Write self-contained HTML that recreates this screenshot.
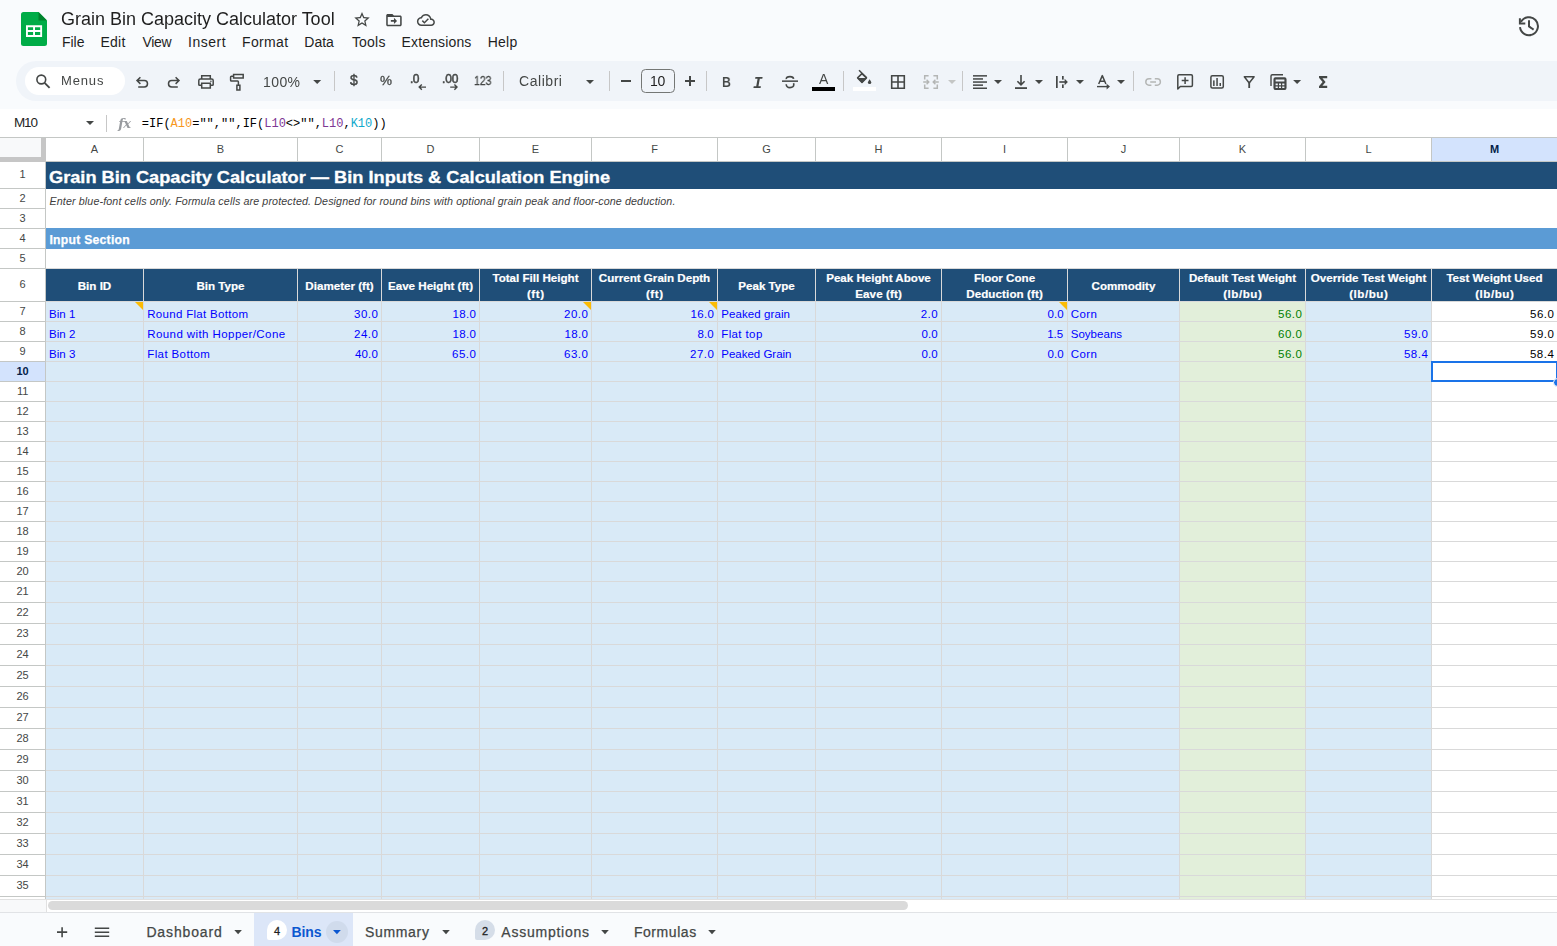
<!DOCTYPE html>
<html lang="en">
<head>
<meta charset="utf-8">
<title>Grain Bin Capacity Calculator Tool - Google Sheets</title>
<style>
html,body{margin:0;padding:0;}
body{width:1557px;height:946px;overflow:hidden;background:#f9fbfd;font-family:"Liberation Sans",sans-serif;}
#app{position:relative;width:1557px;height:946px;overflow:hidden;}
#app div,#app svg,#app span.t{position:absolute;}
#app span.t{white-space:pre;}
#app span.m{font-family:"Liberation Mono",monospace;}
#app span.s{font-family:"DejaVu Serif","Liberation Serif",serif;}
#app span.g{will-change:transform;}

</style>
</head>
<body>
<div id="app">
<div style="left:16px;top:61px;width:1600px;height:40px;background:#f0f4f9;border-radius:20px;"></div>
<div style="left:25px;top:67px;width:100px;height:28px;background:#fff;border-radius:14px;"></div>
<div style="left:0px;top:109px;width:1557px;height:28px;background:#fff;"></div>
<div style="left:0px;top:137px;width:1557px;height:763px;background:#fff;"></div>
<span class="t g" style="left:61.05px;top:7px;font-size:18px;line-height:25px;color:#1f1f1f;letter-spacing:-0.005px;">Grain Bin Capacity Calculator Tool</span>
<span class="t" style="left:61.88px;top:32px;font-size:14px;line-height:20px;color:#1f1f1f;letter-spacing:-0.003px;">File</span>
<span class="t" style="left:100.48px;top:32px;font-size:14px;line-height:20px;color:#1f1f1f;letter-spacing:0.259px;">Edit</span>
<span class="t" style="left:142.44px;top:32px;font-size:14px;line-height:20px;color:#1f1f1f;letter-spacing:-0.283px;">View</span>
<span class="t" style="left:188.02px;top:32px;font-size:14px;line-height:20px;color:#1f1f1f;letter-spacing:0.501px;">Insert</span>
<span class="t" style="left:242.08px;top:32px;font-size:14px;line-height:20px;color:#1f1f1f;letter-spacing:0.346px;">Format</span>
<span class="t" style="left:304.28px;top:32px;font-size:14px;line-height:20px;color:#1f1f1f;letter-spacing:0.018px;">Data</span>
<span class="t" style="left:351.92px;top:32px;font-size:14px;line-height:20px;color:#1f1f1f;letter-spacing:0.21px;">Tools</span>
<span class="t" style="left:401.58px;top:32px;font-size:14px;line-height:20px;color:#1f1f1f;letter-spacing:0.144px;">Extensions</span>
<span class="t" style="left:487.68px;top:32px;font-size:14px;line-height:20px;color:#1f1f1f;letter-spacing:0.263px;">Help</span>
<span class="t g" style="left:60.91px;top:72px;font-size:13px;line-height:18px;color:#444746;letter-spacing:0.856px;">Menus</span>
<span class="t g" style="left:262.71px;top:72px;font-size:14px;line-height:20px;color:#444746;letter-spacing:0.404px;">100%</span>
<span class="t g" style="left:518.74px;top:71px;font-size:14px;line-height:20px;color:#444746;letter-spacing:0.551px;">Calibri</span>
<span class="t g" style="left:649.91px;top:71px;font-size:14px;line-height:20px;color:#1f1f1f;letter-spacing:-0.335px;">10</span>
<div style="left:641px;top:69px;width:32px;height:22px;background:transparent;border:1px solid #747775;border-radius:4.5px;"></div>
<span class="t g" style="left:474.40px;top:73px;font-size:12px;line-height:17px;color:#444746;-webkit-text-stroke:0.3px #444746;transform:scaleX(0.8736);transform-origin:0 0;">123</span>
<span class="t" style="left:13.89px;top:113px;font-size:13.5px;line-height:19px;color:#1f1f1f;letter-spacing:-1.03px;">M10</span>
<div style="left:334px;top:71px;width:1px;height:20px;background:#c7c7c7;"></div>
<div style="left:503px;top:71px;width:1px;height:20px;background:#c7c7c7;"></div>
<div style="left:609px;top:71px;width:1px;height:20px;background:#c7c7c7;"></div>
<div style="left:706px;top:71px;width:1px;height:20px;background:#c7c7c7;"></div>
<div style="left:843px;top:71px;width:1px;height:20px;background:#c7c7c7;"></div>
<div style="left:962px;top:71px;width:1px;height:20px;background:#c7c7c7;"></div>
<div style="left:1133px;top:71px;width:1px;height:20px;background:#c7c7c7;"></div>
<div style="left:106px;top:115px;width:1px;height:17px;background:#c7c7c7;"></div>
<span class="t m" style="left:141.80px;top:116px;font-size:12px;line-height:17px;color:#000;">=IF(<span style="color:#f7981d">A10</span>="","",IF(<span style="color:#7e3794">L10</span>&lt;&gt;"",<span style="color:#7e3794">L10</span>,<span style="color:#11a9cc">K10</span>))</span>
<div style="left:46px;top:162px;width:1511px;height:27px;background:#1f4e78;"></div>
<div style="left:46px;top:228px;width:1511px;height:21px;background:#5b9bd5;"></div>
<div style="left:46px;top:268px;width:1511px;height:1px;background:#d9d9d9;"></div>
<div style="left:46px;top:269px;width:1511px;height:32px;background:#1f4e78;"></div>
<div style="left:46px;top:301px;width:1385px;height:599px;background:#d9eaf7;"></div>
<div style="left:1180px;top:301px;width:125px;height:599px;background:#e2efda;"></div>
<div style="left:46px;top:301px;width:1511px;height:1px;background:#d9d9d9;"></div>
<div style="left:46px;top:321px;width:1511px;height:1px;background:#d9d9d9;"></div>
<div style="left:46px;top:341px;width:1511px;height:1px;background:#d9d9d9;"></div>
<div style="left:46px;top:361px;width:1511px;height:1px;background:#d9d9d9;"></div>
<div style="left:46px;top:381px;width:1511px;height:1px;background:#d9d9d9;"></div>
<div style="left:46px;top:401px;width:1511px;height:1px;background:#d9d9d9;"></div>
<div style="left:46px;top:421px;width:1511px;height:1px;background:#d9d9d9;"></div>
<div style="left:46px;top:441px;width:1511px;height:1px;background:#d9d9d9;"></div>
<div style="left:46px;top:461px;width:1511px;height:1px;background:#d9d9d9;"></div>
<div style="left:46px;top:481px;width:1511px;height:1px;background:#d9d9d9;"></div>
<div style="left:46px;top:501px;width:1511px;height:1px;background:#d9d9d9;"></div>
<div style="left:46px;top:521px;width:1511px;height:1px;background:#d9d9d9;"></div>
<div style="left:46px;top:541px;width:1511px;height:1px;background:#d9d9d9;"></div>
<div style="left:46px;top:561px;width:1511px;height:1px;background:#d9d9d9;"></div>
<div style="left:46px;top:581px;width:1511px;height:1px;background:#d9d9d9;"></div>
<div style="left:46px;top:602px;width:1511px;height:1px;background:#d9d9d9;"></div>
<div style="left:46px;top:623px;width:1511px;height:1px;background:#d9d9d9;"></div>
<div style="left:46px;top:644px;width:1511px;height:1px;background:#d9d9d9;"></div>
<div style="left:46px;top:665px;width:1511px;height:1px;background:#d9d9d9;"></div>
<div style="left:46px;top:686px;width:1511px;height:1px;background:#d9d9d9;"></div>
<div style="left:46px;top:707px;width:1511px;height:1px;background:#d9d9d9;"></div>
<div style="left:46px;top:728px;width:1511px;height:1px;background:#d9d9d9;"></div>
<div style="left:46px;top:749px;width:1511px;height:1px;background:#d9d9d9;"></div>
<div style="left:46px;top:770px;width:1511px;height:1px;background:#d9d9d9;"></div>
<div style="left:46px;top:791px;width:1511px;height:1px;background:#d9d9d9;"></div>
<div style="left:46px;top:812px;width:1511px;height:1px;background:#d9d9d9;"></div>
<div style="left:46px;top:833px;width:1511px;height:1px;background:#d9d9d9;"></div>
<div style="left:46px;top:854px;width:1511px;height:1px;background:#d9d9d9;"></div>
<div style="left:46px;top:875px;width:1511px;height:1px;background:#d9d9d9;"></div>
<div style="left:46px;top:896px;width:1511px;height:1px;background:#d9d9d9;"></div>
<div style="left:143px;top:301px;width:1px;height:599px;background:#d9d9d9;"></div>
<div style="left:297px;top:301px;width:1px;height:599px;background:#d9d9d9;"></div>
<div style="left:381px;top:301px;width:1px;height:599px;background:#d9d9d9;"></div>
<div style="left:479px;top:301px;width:1px;height:599px;background:#d9d9d9;"></div>
<div style="left:591px;top:301px;width:1px;height:599px;background:#d9d9d9;"></div>
<div style="left:717px;top:301px;width:1px;height:599px;background:#d9d9d9;"></div>
<div style="left:815px;top:301px;width:1px;height:599px;background:#d9d9d9;"></div>
<div style="left:941px;top:301px;width:1px;height:599px;background:#d9d9d9;"></div>
<div style="left:1067px;top:301px;width:1px;height:599px;background:#d9d9d9;"></div>
<div style="left:1179px;top:301px;width:1px;height:599px;background:#d9d9d9;"></div>
<div style="left:1305px;top:301px;width:1px;height:599px;background:#d9d9d9;"></div>
<div style="left:1431px;top:301px;width:1px;height:599px;background:#d9d9d9;"></div>
<div style="left:143px;top:268px;width:1px;height:33px;background:#d9d9d9;"></div>
<div style="left:297px;top:268px;width:1px;height:33px;background:#d9d9d9;"></div>
<div style="left:381px;top:268px;width:1px;height:33px;background:#d9d9d9;"></div>
<div style="left:479px;top:268px;width:1px;height:33px;background:#d9d9d9;"></div>
<div style="left:591px;top:268px;width:1px;height:33px;background:#d9d9d9;"></div>
<div style="left:717px;top:268px;width:1px;height:33px;background:#d9d9d9;"></div>
<div style="left:815px;top:268px;width:1px;height:33px;background:#d9d9d9;"></div>
<div style="left:941px;top:268px;width:1px;height:33px;background:#d9d9d9;"></div>
<div style="left:1067px;top:268px;width:1px;height:33px;background:#d9d9d9;"></div>
<div style="left:1179px;top:268px;width:1px;height:33px;background:#d9d9d9;"></div>
<div style="left:1305px;top:268px;width:1px;height:33px;background:#d9d9d9;"></div>
<div style="left:1431px;top:268px;width:1px;height:33px;background:#d9d9d9;"></div>
<div style="left:0px;top:137px;width:1557px;height:1px;background:#c4c7c5;"></div>
<div style="left:46px;top:138px;width:1511px;height:23px;background:#fff;"></div>
<div style="left:1432px;top:138px;width:125px;height:23px;background:#d3e3fd;"></div>
<div style="left:46px;top:161px;width:1511px;height:1px;background:#c4c7c5;"></div>
<div style="left:143px;top:138px;width:1px;height:23px;background:#c4c7c5;"></div>
<div style="left:297px;top:138px;width:1px;height:23px;background:#c4c7c5;"></div>
<div style="left:381px;top:138px;width:1px;height:23px;background:#c4c7c5;"></div>
<div style="left:479px;top:138px;width:1px;height:23px;background:#c4c7c5;"></div>
<div style="left:591px;top:138px;width:1px;height:23px;background:#c4c7c5;"></div>
<div style="left:717px;top:138px;width:1px;height:23px;background:#c4c7c5;"></div>
<div style="left:815px;top:138px;width:1px;height:23px;background:#c4c7c5;"></div>
<div style="left:941px;top:138px;width:1px;height:23px;background:#c4c7c5;"></div>
<div style="left:1067px;top:138px;width:1px;height:23px;background:#c4c7c5;"></div>
<div style="left:1179px;top:138px;width:1px;height:23px;background:#c4c7c5;"></div>
<div style="left:1305px;top:138px;width:1px;height:23px;background:#c4c7c5;"></div>
<div style="left:1431px;top:138px;width:1px;height:23px;background:#c4c7c5;"></div>
<div style="left:0px;top:162px;width:45px;height:738px;background:#fff;"></div>
<div style="left:0px;top:362px;width:45px;height:19px;background:#d3e3fd;"></div>
<div style="left:45px;top:162px;width:1px;height:738px;background:#c4c7c5;"></div>
<div style="left:0px;top:188px;width:45px;height:1px;background:#c4c7c5;"></div>
<div style="left:0px;top:208px;width:45px;height:1px;background:#c4c7c5;"></div>
<div style="left:0px;top:228px;width:45px;height:1px;background:#c4c7c5;"></div>
<div style="left:0px;top:248px;width:45px;height:1px;background:#c4c7c5;"></div>
<div style="left:0px;top:268px;width:45px;height:1px;background:#c4c7c5;"></div>
<div style="left:0px;top:301px;width:45px;height:1px;background:#c4c7c5;"></div>
<div style="left:0px;top:321px;width:45px;height:1px;background:#c4c7c5;"></div>
<div style="left:0px;top:341px;width:45px;height:1px;background:#c4c7c5;"></div>
<div style="left:0px;top:361px;width:45px;height:1px;background:#c4c7c5;"></div>
<div style="left:0px;top:381px;width:45px;height:1px;background:#c4c7c5;"></div>
<div style="left:0px;top:401px;width:45px;height:1px;background:#c4c7c5;"></div>
<div style="left:0px;top:421px;width:45px;height:1px;background:#c4c7c5;"></div>
<div style="left:0px;top:441px;width:45px;height:1px;background:#c4c7c5;"></div>
<div style="left:0px;top:461px;width:45px;height:1px;background:#c4c7c5;"></div>
<div style="left:0px;top:481px;width:45px;height:1px;background:#c4c7c5;"></div>
<div style="left:0px;top:501px;width:45px;height:1px;background:#c4c7c5;"></div>
<div style="left:0px;top:521px;width:45px;height:1px;background:#c4c7c5;"></div>
<div style="left:0px;top:541px;width:45px;height:1px;background:#c4c7c5;"></div>
<div style="left:0px;top:561px;width:45px;height:1px;background:#c4c7c5;"></div>
<div style="left:0px;top:581px;width:45px;height:1px;background:#c4c7c5;"></div>
<div style="left:0px;top:602px;width:45px;height:1px;background:#c4c7c5;"></div>
<div style="left:0px;top:623px;width:45px;height:1px;background:#c4c7c5;"></div>
<div style="left:0px;top:644px;width:45px;height:1px;background:#c4c7c5;"></div>
<div style="left:0px;top:665px;width:45px;height:1px;background:#c4c7c5;"></div>
<div style="left:0px;top:686px;width:45px;height:1px;background:#c4c7c5;"></div>
<div style="left:0px;top:707px;width:45px;height:1px;background:#c4c7c5;"></div>
<div style="left:0px;top:728px;width:45px;height:1px;background:#c4c7c5;"></div>
<div style="left:0px;top:749px;width:45px;height:1px;background:#c4c7c5;"></div>
<div style="left:0px;top:770px;width:45px;height:1px;background:#c4c7c5;"></div>
<div style="left:0px;top:791px;width:45px;height:1px;background:#c4c7c5;"></div>
<div style="left:0px;top:812px;width:45px;height:1px;background:#c4c7c5;"></div>
<div style="left:0px;top:833px;width:45px;height:1px;background:#c4c7c5;"></div>
<div style="left:0px;top:854px;width:45px;height:1px;background:#c4c7c5;"></div>
<div style="left:0px;top:875px;width:45px;height:1px;background:#c4c7c5;"></div>
<div style="left:0px;top:896px;width:45px;height:1px;background:#c4c7c5;"></div>
<div style="left:0px;top:138px;width:41px;height:19px;background:#f8f9fa;"></div>
<div style="left:41px;top:138px;width:5px;height:24px;background:#c6c6c6;"></div>
<div style="left:0px;top:157px;width:46px;height:5px;background:#c6c6c6;"></div>
<span class="t" style="left:90.83px;top:142px;font-size:11px;line-height:15px;color:#444746;">A</span>
<span class="t" style="left:216.83px;top:142px;font-size:11px;line-height:15px;color:#444746;">B</span>
<span class="t" style="left:335.52px;top:142px;font-size:11px;line-height:15px;color:#444746;">C</span>
<span class="t" style="left:426.52px;top:142px;font-size:11px;line-height:15px;color:#444746;">D</span>
<span class="t" style="left:531.83px;top:142px;font-size:11px;line-height:15px;color:#444746;">E</span>
<span class="t" style="left:651.13px;top:142px;font-size:11px;line-height:15px;color:#444746;">F</span>
<span class="t" style="left:762.22px;top:142px;font-size:11px;line-height:15px;color:#444746;">G</span>
<span class="t" style="left:874.52px;top:142px;font-size:11px;line-height:15px;color:#444746;">H</span>
<span class="t" style="left:1002.97px;top:142px;font-size:11px;line-height:15px;color:#444746;">I</span>
<span class="t" style="left:1120.75px;top:142px;font-size:11px;line-height:15px;color:#444746;">J</span>
<span class="t" style="left:1238.83px;top:142px;font-size:11px;line-height:15px;color:#444746;">K</span>
<span class="t" style="left:1365.44px;top:142px;font-size:11px;line-height:15px;color:#444746;">L</span>
<span class="t" style="left:1489.91px;top:142px;font-size:11px;line-height:15px;color:#041e49;font-weight:700;">M</span>
<span class="t" style="left:19.54px;top:167px;font-size:11px;line-height:15px;color:#444746;">1</span>
<span class="t" style="left:19.54px;top:191px;font-size:11px;line-height:15px;color:#444746;">2</span>
<span class="t" style="left:19.54px;top:211px;font-size:11px;line-height:15px;color:#444746;">3</span>
<span class="t" style="left:19.54px;top:231px;font-size:11px;line-height:15px;color:#444746;">4</span>
<span class="t" style="left:19.54px;top:251px;font-size:11px;line-height:15px;color:#444746;">5</span>
<span class="t" style="left:19.54px;top:277px;font-size:11px;line-height:15px;color:#444746;">6</span>
<span class="t" style="left:19.54px;top:304px;font-size:11px;line-height:15px;color:#444746;">7</span>
<span class="t" style="left:19.54px;top:324px;font-size:11px;line-height:15px;color:#444746;">8</span>
<span class="t" style="left:19.54px;top:344px;font-size:11px;line-height:15px;color:#444746;">9</span>
<span class="t" style="left:16.48px;top:364px;font-size:11px;line-height:15px;color:#041e49;font-weight:700;">10</span>
<span class="t" style="left:16.89px;top:384px;font-size:11px;line-height:15px;color:#444746;">11</span>
<span class="t" style="left:16.48px;top:404px;font-size:11px;line-height:15px;color:#444746;">12</span>
<span class="t" style="left:16.48px;top:424px;font-size:11px;line-height:15px;color:#444746;">13</span>
<span class="t" style="left:16.48px;top:444px;font-size:11px;line-height:15px;color:#444746;">14</span>
<span class="t" style="left:16.48px;top:464px;font-size:11px;line-height:15px;color:#444746;">15</span>
<span class="t" style="left:16.48px;top:484px;font-size:11px;line-height:15px;color:#444746;">16</span>
<span class="t" style="left:16.48px;top:504px;font-size:11px;line-height:15px;color:#444746;">17</span>
<span class="t" style="left:16.48px;top:524px;font-size:11px;line-height:15px;color:#444746;">18</span>
<span class="t" style="left:16.48px;top:544px;font-size:11px;line-height:15px;color:#444746;">19</span>
<span class="t" style="left:16.48px;top:564px;font-size:11px;line-height:15px;color:#444746;">20</span>
<span class="t" style="left:16.48px;top:584px;font-size:11px;line-height:15px;color:#444746;">21</span>
<span class="t" style="left:16.48px;top:605px;font-size:11px;line-height:15px;color:#444746;">22</span>
<span class="t" style="left:16.48px;top:626px;font-size:11px;line-height:15px;color:#444746;">23</span>
<span class="t" style="left:16.48px;top:647px;font-size:11px;line-height:15px;color:#444746;">24</span>
<span class="t" style="left:16.48px;top:668px;font-size:11px;line-height:15px;color:#444746;">25</span>
<span class="t" style="left:16.48px;top:689px;font-size:11px;line-height:15px;color:#444746;">26</span>
<span class="t" style="left:16.48px;top:710px;font-size:11px;line-height:15px;color:#444746;">27</span>
<span class="t" style="left:16.48px;top:731px;font-size:11px;line-height:15px;color:#444746;">28</span>
<span class="t" style="left:16.48px;top:752px;font-size:11px;line-height:15px;color:#444746;">29</span>
<span class="t" style="left:16.48px;top:773px;font-size:11px;line-height:15px;color:#444746;">30</span>
<span class="t" style="left:16.48px;top:794px;font-size:11px;line-height:15px;color:#444746;">31</span>
<span class="t" style="left:16.48px;top:815px;font-size:11px;line-height:15px;color:#444746;">32</span>
<span class="t" style="left:16.48px;top:836px;font-size:11px;line-height:15px;color:#444746;">33</span>
<span class="t" style="left:16.48px;top:857px;font-size:11px;line-height:15px;color:#444746;">34</span>
<span class="t" style="left:16.48px;top:878px;font-size:11px;line-height:15px;color:#444746;">35</span>
<span class="t" style="left:49.29px;top:166px;font-size:16.6px;line-height:23px;color:#fff;font-weight:700;-webkit-text-stroke:0.3px #fff;transform:scaleX(1.0965);transform-origin:0 0;">Grain Bin Capacity Calculator — Bin Inputs &amp; Calculation Engine</span>
<span class="t" style="left:49.56px;top:194px;font-size:10.7px;line-height:15px;color:#404040;font-style:italic;letter-spacing:0.124px;">Enter blue-font cells only. Formula cells are protected. Designed for round bins with optional grain peak and floor-cone deduction.</span>
<span class="t" style="left:49.48px;top:232px;font-size:12.2px;line-height:17px;color:#fff;font-weight:700;letter-spacing:0.256px;-webkit-text-stroke:0.25px #fff;">Input Section</span>
<span class="t" style="left:77.75px;top:278px;font-size:11.6px;line-height:16px;color:#fff;font-weight:700;-webkit-text-stroke:0.2px #fff;">Bin ID</span>
<span class="t" style="left:196.45px;top:278px;font-size:11.6px;line-height:16px;color:#fff;font-weight:700;-webkit-text-stroke:0.2px #fff;">Bin Type</span>
<span class="t" style="left:305.35px;top:278px;font-size:11.6px;line-height:16px;color:#fff;font-weight:700;-webkit-text-stroke:0.2px #fff;">Diameter (ft)</span>
<span class="t" style="left:387.98px;top:278px;font-size:11.6px;line-height:16px;color:#fff;font-weight:700;-webkit-text-stroke:0.2px #fff;">Eave Height (ft)</span>
<span class="t" style="left:492.45px;top:270px;font-size:11.6px;line-height:16px;color:#fff;font-weight:700;-webkit-text-stroke:0.2px #fff;">Total Fill Height</span>
<span class="t" style="left:526.95px;top:286px;font-size:11.6px;line-height:16px;color:#fff;font-weight:700;letter-spacing:0.55px;-webkit-text-stroke:0.2px #fff;">(ft)</span>
<span class="t" style="left:598.78px;top:270px;font-size:11.6px;line-height:16px;color:#fff;font-weight:700;-webkit-text-stroke:0.2px #fff;">Current Grain Depth</span>
<span class="t" style="left:645.95px;top:286px;font-size:11.6px;line-height:16px;color:#fff;font-weight:700;letter-spacing:0.55px;-webkit-text-stroke:0.2px #fff;">(ft)</span>
<span class="t" style="left:738.25px;top:278px;font-size:11.6px;line-height:16px;color:#fff;font-weight:700;-webkit-text-stroke:0.2px #fff;">Peak Type</span>
<span class="t" style="left:826.20px;top:270px;font-size:11.6px;line-height:16px;color:#fff;font-weight:700;-webkit-text-stroke:0.2px #fff;">Peak Height Above</span>
<span class="t" style="left:855.22px;top:286px;font-size:11.6px;line-height:16px;color:#fff;font-weight:700;letter-spacing:0.1px;-webkit-text-stroke:0.2px #fff;">Eave (ft)</span>
<span class="t" style="left:973.91px;top:270px;font-size:11.6px;line-height:16px;color:#fff;font-weight:700;-webkit-text-stroke:0.2px #fff;">Floor Cone</span>
<span class="t" style="left:966.18px;top:286px;font-size:11.6px;line-height:16px;color:#fff;font-weight:700;letter-spacing:0.1px;-webkit-text-stroke:0.2px #fff;">Deduction (ft)</span>
<span class="t" style="left:1091.62px;top:278px;font-size:11.6px;line-height:16px;color:#fff;font-weight:700;-webkit-text-stroke:0.2px #fff;">Commodity</span>
<span class="t" style="left:1188.93px;top:270px;font-size:11.6px;line-height:16px;color:#fff;font-weight:700;-webkit-text-stroke:0.2px #fff;">Default Test Weight</span>
<span class="t" style="left:1223.14px;top:286px;font-size:11.6px;line-height:16px;color:#fff;font-weight:700;letter-spacing:0.55px;-webkit-text-stroke:0.2px #fff;">(lb/bu)</span>
<span class="t" style="left:1310.73px;top:270px;font-size:11.6px;line-height:16px;color:#fff;font-weight:700;-webkit-text-stroke:0.2px #fff;">Override Test Weight</span>
<span class="t" style="left:1349.14px;top:286px;font-size:11.6px;line-height:16px;color:#fff;font-weight:700;letter-spacing:0.55px;-webkit-text-stroke:0.2px #fff;">(lb/bu)</span>
<span class="t" style="left:1446.40px;top:270px;font-size:11.6px;line-height:16px;color:#fff;font-weight:700;-webkit-text-stroke:0.2px #fff;">Test Weight Used</span>
<span class="t" style="left:1475.14px;top:286px;font-size:11.6px;line-height:16px;color:#fff;font-weight:700;letter-spacing:0.55px;-webkit-text-stroke:0.2px #fff;">(lb/bu)</span>
<span class="t" style="left:49.05px;top:306px;font-size:11.5px;line-height:16px;color:#0000ff;letter-spacing:0.026px;">Bin 1</span>
<span class="t" style="left:147.25px;top:306px;font-size:11.5px;line-height:16px;color:#0000ff;letter-spacing:0.305px;">Round Flat Bottom</span>
<span class="t" style="left:353.99px;top:306px;font-size:11.5px;line-height:16px;color:#0000ff;letter-spacing:0.512px;">30.0</span>
<span class="t" style="left:452.55px;top:306px;font-size:11.5px;line-height:16px;color:#0000ff;letter-spacing:0.326px;">18.0</span>
<span class="t" style="left:564.08px;top:306px;font-size:11.5px;line-height:16px;color:#0000ff;letter-spacing:0.482px;">20.0</span>
<span class="t" style="left:690.55px;top:306px;font-size:11.5px;line-height:16px;color:#0000ff;letter-spacing:0.326px;">16.0</span>
<span class="t" style="left:721.25px;top:306px;font-size:11.5px;line-height:16px;color:#0000ff;letter-spacing:0.088px;">Peaked grain</span>
<span class="t" style="left:920.68px;top:306px;font-size:11.5px;line-height:16px;color:#0000ff;letter-spacing:0.492px;">2.0</span>
<span class="t" style="left:1047.43px;top:306px;font-size:11.5px;line-height:16px;color:#0000ff;letter-spacing:0.116px;">0.0</span>
<span class="t" style="left:1070.71px;top:306px;font-size:11.5px;line-height:16px;color:#0000ff;letter-spacing:0.436px;">Corn</span>
<span class="t" style="left:1278.03px;top:306px;font-size:11.5px;line-height:16px;color:#008000;letter-spacing:0.497px;">56.0</span>
<span class="t" style="left:1530.03px;top:306px;font-size:11.5px;line-height:16px;color:#000;letter-spacing:0.497px;">56.0</span>
<span class="t" style="left:49.05px;top:326px;font-size:11.5px;line-height:16px;color:#0000ff;letter-spacing:0.028px;">Bin 2</span>
<span class="t" style="left:147.25px;top:326px;font-size:11.5px;line-height:16px;color:#0000ff;letter-spacing:0.415px;">Round with Hopper/Cone</span>
<span class="t" style="left:354.08px;top:326px;font-size:11.5px;line-height:16px;color:#0000ff;letter-spacing:0.482px;">24.0</span>
<span class="t" style="left:452.55px;top:326px;font-size:11.5px;line-height:16px;color:#0000ff;letter-spacing:0.326px;">18.0</span>
<span class="t" style="left:564.55px;top:326px;font-size:11.5px;line-height:16px;color:#0000ff;letter-spacing:0.326px;">18.0</span>
<span class="t" style="left:697.41px;top:326px;font-size:11.5px;line-height:16px;color:#0000ff;letter-spacing:0.126px;">8.0</span>
<span class="t" style="left:721.25px;top:326px;font-size:11.5px;line-height:16px;color:#0000ff;letter-spacing:0.382px;">Flat top</span>
<span class="t" style="left:921.43px;top:326px;font-size:11.5px;line-height:16px;color:#0000ff;letter-spacing:0.116px;">0.0</span>
<span class="t" style="left:1047.15px;top:326px;font-size:11.5px;line-height:16px;color:#0000ff;letter-spacing:-0.033px;">1.5</span>
<span class="t" style="left:1070.71px;top:326px;font-size:11.5px;line-height:16px;color:#0000ff;letter-spacing:0.034px;">Soybeans</span>
<span class="t" style="left:1278.03px;top:326px;font-size:11.5px;line-height:16px;color:#008000;letter-spacing:0.497px;">60.0</span>
<span class="t" style="left:1404.03px;top:326px;font-size:11.5px;line-height:16px;color:#0000ff;letter-spacing:0.497px;">59.0</span>
<span class="t" style="left:1530.03px;top:326px;font-size:11.5px;line-height:16px;color:#000;letter-spacing:0.497px;">59.0</span>
<span class="t" style="left:49.05px;top:346px;font-size:11.5px;line-height:16px;color:#0000ff;letter-spacing:0.008px;">Bin 3</span>
<span class="t" style="left:147.25px;top:346px;font-size:11.5px;line-height:16px;color:#0000ff;letter-spacing:0.387px;">Flat Bottom</span>
<span class="t" style="left:354.93px;top:346px;font-size:11.5px;line-height:16px;color:#0000ff;letter-spacing:0.199px;">40.0</span>
<span class="t" style="left:452.03px;top:346px;font-size:11.5px;line-height:16px;color:#0000ff;letter-spacing:0.497px;">65.0</span>
<span class="t" style="left:564.03px;top:346px;font-size:11.5px;line-height:16px;color:#0000ff;letter-spacing:0.497px;">63.0</span>
<span class="t" style="left:690.08px;top:346px;font-size:11.5px;line-height:16px;color:#0000ff;letter-spacing:0.482px;">27.0</span>
<span class="t" style="left:721.25px;top:346px;font-size:11.5px;line-height:16px;color:#0000ff;letter-spacing:-0.008px;">Peaked Grain</span>
<span class="t" style="left:921.43px;top:346px;font-size:11.5px;line-height:16px;color:#0000ff;letter-spacing:0.116px;">0.0</span>
<span class="t" style="left:1047.43px;top:346px;font-size:11.5px;line-height:16px;color:#0000ff;letter-spacing:0.116px;">0.0</span>
<span class="t" style="left:1070.71px;top:346px;font-size:11.5px;line-height:16px;color:#0000ff;letter-spacing:0.436px;">Corn</span>
<span class="t" style="left:1278.03px;top:346px;font-size:11.5px;line-height:16px;color:#008000;letter-spacing:0.497px;">56.0</span>
<span class="t" style="left:1404.03px;top:346px;font-size:11.5px;line-height:16px;color:#0000ff;letter-spacing:0.463px;">58.4</span>
<span class="t" style="left:1530.03px;top:346px;font-size:11.5px;line-height:16px;color:#000;letter-spacing:0.463px;">58.4</span>
<svg style="left:135px;top:302px;" width="8" height="8" viewBox="0 0 8 8"><path d="M0 0H8V8Z" fill="#fbbc04"/></svg>
<svg style="left:583px;top:302px;" width="8" height="8" viewBox="0 0 8 8"><path d="M0 0H8V8Z" fill="#fbbc04"/></svg>
<svg style="left:709px;top:302px;" width="8" height="8" viewBox="0 0 8 8"><path d="M0 0H8V8Z" fill="#fbbc04"/></svg>
<svg style="left:1059px;top:302px;" width="8" height="8" viewBox="0 0 8 8"><path d="M0 0H8V8Z" fill="#fbbc04"/></svg>
<div style="left:1431px;top:361px;width:127px;height:21px;background:transparent;border:2px solid #1a73e8;box-sizing:border-box;"></div>
<div style="left:1552.5px;top:377.5px;width:9px;height:9px;background:#1a73e8;border-radius:50%;border:1px solid #fff;box-sizing:border-box;"></div>
<svg style="left:0;top:0" width="1557" height="137" viewBox="0 0 1557 137"><path d="M23.5 12H38.6L47 20.4V43.5Q47 46 44.5 46H23.5Q21 46 21 43.5V14.5Q21 12 23.5 12Z" fill="#00ac47" /><path d="M38.5 12L47 20.5H38.5Z" fill="#00832d" /><path d="M26 25.2H42.1V37.1H26ZM27.9 27.2V30.1H33.1V27.2ZM35 27.2V30.1H40.2V27.2ZM27.9 32.1V35.1H33.1V32.1ZM35 32.1V35.1H40.2V32.1Z" fill="#fff" fill-rule="evenodd"/><path transform="translate(352.7 10.4) scale(0.77500)" d="M22 9.24l-7.19-.62L12 2 9.19 8.63 2 9.24l5.46 4.73L5.82 21 12 17.27 18.18 21l-1.63-7.03L22 9.24zM12 15.4l-3.76 2.27 1-4.28-3.32-2.88 4.38-.38L12 6.1l1.71 4.04 4.38.38-3.32 2.88 1 4.28L12 15.4z" fill="#444746"/><path transform="translate(384.65 10.8) scale(0.77500)" d="M20 6h-8l-2-2H4c-1.1 0-2 .9-2 2v12c0 1.1.9 2 2 2h16c1.1 0 2-.9 2-2V8c0-1.1-.9-2-2-2zm0 12H4V8h16v10zm-8-1l4-4-4-4v3H8v2h4v3z" fill="#444746"/><path transform="translate(416.9 11) scale(0.75000)" d="M19.35 10.04C18.67 6.59 15.64 4 12 4 9.11 4 6.6 5.64 5.35 8.04 2.34 8.36 0 10.91 0 14c0 3.31 2.69 6 6 6h13c2.76 0 5-2.24 5-5 0-2.64-2.05-4.78-4.65-4.96zM19 18H6c-2.21 0-4-1.79-4-4 0-2.05 1.53-3.76 3.56-3.97l1.07-.11.5-.95C8.08 7.14 9.94 6 12 6c2.62 0 4.88 1.86 5.39 4.43l.3 1.5 1.53.11c1.56.1 2.78 1.41 2.78 2.96 0 1.65-1.35 3-3 3zm-9-3.82l-2.09-2.09L6.5 13.5 10 17l6.01-6.01-1.41-1.41z" fill="#444746"/><path d="M1520 27.2A9 9 0 1 0 1521 21.9" fill="none" stroke="#444746" stroke-width="2" /><path d="M1519.9 18.2V23.6H1525.3" fill="none" stroke="#444746" stroke-width="2" /><path d="M1529 20.2V26.4L1533.6 29.6" fill="none" stroke="#444746" stroke-width="2" /><circle cx="41.3" cy="79.5" r="4.4" fill="none" stroke="#444746" stroke-width="1.6"/><path d="M44.6 82.8L49.6 87.8" fill="none" stroke="#444746" stroke-width="1.8" /><path d="M138.2 87H144.3A3.2 3.2 0 0 0 144.3 80.6H137.4M140.4 77.3L137 80.6L140.4 83.9" fill="none" stroke="#444746" stroke-width="1.5" /><path d="M177.8 87H171.7A3.2 3.2 0 0 1 171.7 80.6H178.6M175.6 77.3L179 80.6L175.6 83.9" fill="none" stroke="#444746" stroke-width="1.5" /><path d="M201.7 79V75.7H210.3V79M201.7 85.3H199.6Q198.8 85.3 198.8 84.5V80.6Q198.8 79 200.4 79H211.6Q213.2 79 213.2 80.6V84.5Q213.2 85.3 212.4 85.3H210.3M201.7 83.2H210.3V88.1H201.7Z" fill="none" stroke="#444746" stroke-width="1.5" /><circle cx="210.9" cy="81.3" r="0.8" fill="#444746"/><path d="M233.6 74.5H243.2V78H233.6ZM233.6 76.2H231.4Q230.6 76.2 230.6 77V80.3Q230.6 81.1 231.4 81.1H237.6Q238.4 81.1 238.4 81.9V84.6M236.9 85.2H239.9V90.1H236.9Z" fill="none" stroke="#444746" stroke-width="1.5" /><path d="M313.2 80h8l-4.0 4z" fill="#444746" /><path d="M586.0 80h8l-4.0 4z" fill="#444746" /><path d="M994.0 80h8l-4.0 4z" fill="#444746" /><path d="M1035.0 80h8l-4.0 4z" fill="#444746" /><path d="M1076.0 80h8l-4.0 4z" fill="#444746" /><path d="M1117.0 80h8l-4.0 4z" fill="#444746" /><path d="M1293.1 80h8l-4.0 4z" fill="#444746" /><path d="M948.0 80h8l-4.0 4z" fill="#c4c6c5" /><path d="M86.0 121h8l-4.0 4z" fill="#444746" /><path d="M426 87.1H419.2M421.8 84.5L419.2 87.1L421.8 89.7" fill="none" stroke="#444746" stroke-width="1.4" /><path d="M450.2 87.1H457M454.4 84.5L457 87.1L454.4 89.7" fill="none" stroke="#444746" stroke-width="1.4" /><rect x="621" y="80" width="10" height="2" fill="#444746"/><rect x="685" y="80" width="10" height="2" fill="#444746"/><rect x="689" y="76" width="2" height="10" fill="#444746"/><rect x="782" y="80.4" width="16" height="1.5" fill="#444746"/><path d="M786.3 79.2Q786 76.6 790 76.6Q793.4 76.6 793.6 78.9M786.2 84.2Q786.4 87.6 790 87.6Q793.8 87.6 793.8 84.6Q793.8 83.8 793.4 83.2" fill="none" stroke="#444746" stroke-width="1.6" /><rect x="812" y="87" width="23" height="4" fill="#000"/><rect x="853" y="87" width="23" height="4" fill="#fff"/><path d="M859 70.2L866.6 77.8" fill="none" stroke="#444746" stroke-width="1.5" /><path d="M861.9 73.6L857.6 77.9L862 82.5L866.5 77.9Z" fill="none" stroke="#444746" stroke-width="1.5" stroke-linejoin="round"/><path d="M857.4 78H866.7L862 83Z" fill="#444746" /><path d="M869.6 79.2Q871.3 81.5 871.3 82.4A1.7 1.7 0 0 1 867.9 82.4Q867.9 81.5 869.6 79.2Z" fill="#444746" /><path d="M891.7 75.8H904.3V88.2H891.7ZM898 75.8V88.2M891.7 82H904.3" fill="none" stroke="#444746" stroke-width="1.6" /><path d="M928.6 75.8H924.7V79.6M924.7 84.4V88.2H928.6M933.4 75.8H937.3V79.6M937.3 84.4V88.2H933.4" fill="none" stroke="#b4b6b5" stroke-width="1.5" /><path d="M923.2 82H928.6M926.6 79.8L928.8 82L926.6 84.2M938.8 82H933.4M935.4 79.8L933.2 82L935.4 84.2" fill="none" stroke="#b4b6b5" stroke-width="1.4" /><rect x="973" y="75.1" width="14" height="1.5" fill="#444746"/><rect x="973" y="78.19999999999999" width="10" height="1.5" fill="#444746"/><rect x="973" y="81.3" width="14" height="1.5" fill="#444746"/><rect x="973" y="84.39999999999999" width="10" height="1.5" fill="#444746"/><rect x="973" y="87.5" width="14" height="1.5" fill="#444746"/><rect x="1015" y="87.2" width="12" height="1.8" fill="#444746"/><path d="M1021 75V84.6M1017.4 81.2L1021 84.8L1024.6 81.2" fill="none" stroke="#444746" stroke-width="1.6" /><rect x="1056" y="76" width="1.7" height="12" fill="#444746"/><rect x="1062" y="76" width="1.7" height="3.6" fill="#444746"/><rect x="1062" y="84.4" width="1.7" height="3.6" fill="#444746"/><path d="M1059.3 82H1066" fill="none" stroke="#444746" stroke-width="1.6" /><path d="M1064.6 78.8L1067.9 82L1064.6 85.2Z" fill="#444746" /><path d="M1098.7 84L1102.3 75.6L1105.9 84M1100 81.2H1104.6" fill="none" stroke="#444746" stroke-width="1.5" stroke-linejoin="round"/><path d="M1097 86.6H1108" fill="none" stroke="#444746" stroke-width="1.4" /><path d="M1106.6 83.8L1110 86.6L1106.6 89.4Z" fill="#444746" /><path d="M1151.4 78.8H1149A3.2 3.2 0 0 0 1149 85.2H1151.4M1154.8 78.8H1157.2A3.2 3.2 0 0 1 1157.2 85.2H1154.8M1150.2 82H1156" fill="none" stroke="#b4b6b5" stroke-width="1.5" /><path d="M1177.8 89V75.9Q1177.8 74.7 1179 74.7H1191.2Q1192.4 74.7 1192.4 75.9V85.3Q1192.4 86.5 1191.2 86.5H1180.3Z" fill="none" stroke="#444746" stroke-width="1.5" stroke-linejoin="round"/><path d="M1181.7 80.6H1188.5M1185.1 77.2V84" fill="none" stroke="#444746" stroke-width="1.5" /><path d="M1212.4 75.8H1221.8Q1223.3 75.8 1223.3 77.3V86.6Q1223.3 88.1 1221.8 88.1H1212.4Q1210.9 88.1 1210.9 86.6V77.3Q1210.9 75.8 1212.4 75.8Z" fill="none" stroke="#444746" stroke-width="1.5" /><rect x="1213.1" y="80.4" width="1.5" height="5.6" fill="#444746"/><rect x="1216.3" y="78" width="1.5" height="8" fill="#444746"/><rect x="1219.5" y="83" width="1.5" height="3" fill="#444746"/><path d="M1244.3 76.8H1254.1L1249.2 83Z" fill="none" stroke="#444746" stroke-width="1.5" stroke-linejoin="round"/><rect x="1248.3" y="82.5" width="1.8" height="5.5" fill="#444746"/><path d="M1271 86V76Q1271 74.7 1272.3 74.7H1283" fill="none" stroke="#444746" stroke-width="1.4" /><path d="M1275.4 78H1284.6Q1285.8 78 1285.8 79.2V88Q1285.8 89.2 1284.6 89.2H1275.4Q1274.2 89.2 1274.2 88V79.2Q1274.2 78 1275.4 78Z" fill="none" stroke="#444746" stroke-width="1.5" /><path d="M1274.2 78H1285.8V89.2H1274.2ZM1275.6 79.4V81.6H1284.4V79.4ZM1275.6 83.4V85.2H1277.8V83.4ZM1279 83.4V85.2H1281V83.4ZM1282.2 83.4V85.2H1284.4V83.4ZM1275.6 86.4V87.9H1277.8V86.4ZM1279 86.4V87.9H1281V86.4ZM1282.2 86.4V87.9H1284.4V86.4Z" fill="#444746" fill-rule="evenodd"/><path d="M1319 76H1327.2V78.2H1322.4L1325.6 82L1322.4 85.8H1327.2V88H1319V86.2L1322.6 82L1319 77.8Z" fill="#444746" /></svg>
<span class="t g" style="left:350.10px;top:70px;font-size:14px;line-height:20px;color:#444746;-webkit-text-stroke:0.4px #444746;">$</span>
<span class="t g" style="left:380.09px;top:71px;font-size:13.5px;line-height:19px;color:#444746;-webkit-text-stroke:0.3px #444746;">%</span>
<span class="t g" style="left:409.70px;top:71px;font-size:12px;line-height:17px;color:#444746;letter-spacing:-0.616px;-webkit-text-stroke:0.5px #444746;">.0</span>
<span class="t g" style="left:441.70px;top:71px;font-size:12px;line-height:17px;color:#444746;letter-spacing:-0.094px;-webkit-text-stroke:0.5px #444746;">.00</span>
<span class="t g" style="left:721.60px;top:71px;font-size:15.2px;line-height:21px;color:#444746;font-weight:700;transform:scaleX(0.8114);transform-origin:0 0;">B</span>
<span class="t m g" style="left:753.40px;top:73px;font-size:16px;line-height:22px;color:#444746;font-weight:700;font-style:italic;">I</span>
<span class="t g" style="left:818.53px;top:69px;font-size:14px;line-height:20px;color:#444746;">A</span>
<span class="t s" style="left:118.20px;top:115px;font-size:13px;line-height:18px;color:#989b9f;font-weight:700;font-style:italic;letter-spacing:-0.6px;">fx</span>
<div style="left:0px;top:897px;width:46px;height:3px;background:#fff;"></div>
<div style="left:45px;top:897px;width:1px;height:3px;background:#c4c7c5;"></div>
<div style="left:0px;top:899px;width:1557px;height:1px;background:#e1e1e1;"></div>
<div style="left:0px;top:900px;width:1557px;height:12px;background:#fff;"></div>
<div style="left:0px;top:900px;width:46px;height:12px;background:#f8f9fa;"></div>
<div style="left:46px;top:900px;width:1px;height:12px;background:#e1e1e1;"></div>
<div style="left:48px;top:901px;width:860px;height:9px;background:#dadada;border-radius:5px;"></div>
<div style="left:0px;top:912px;width:1557px;height:1px;background:#e1e3e6;"></div>
<div style="left:0px;top:913px;width:1557px;height:33px;background:#f9fbfd;"></div>
<div style="left:254px;top:913px;width:99px;height:33px;background:#dce6f8;"></div>
<div style="left:326px;top:921px;width:22px;height:22px;background:#d0dbec;border-radius:50%;"></div>
<div style="left:267px;top:920px;width:20px;height:20px;background:#fff;border-radius:10px 10px 10px 2px;"></div>
<div style="left:475px;top:920px;width:20px;height:20px;background:#d5dde8;border-radius:10px 10px 10px 2px;"></div>
<span class="t" style="left:273.94px;top:924px;font-size:11px;line-height:15px;color:#1f1f1f;-webkit-text-stroke:0.3px #1f1f1f;">4</span>
<span class="t" style="left:481.94px;top:924px;font-size:11px;line-height:15px;color:#1f1f1f;-webkit-text-stroke:0.3px #1f1f1f;">2</span>
<span class="t" style="left:146.38px;top:922px;font-size:14px;line-height:20px;color:#444746;letter-spacing:0.874px;-webkit-text-stroke:0.25px #444746;">Dashboard</span>
<span class="t" style="left:291.55px;top:922px;font-size:14px;line-height:20px;color:#0b57d0;font-weight:700;letter-spacing:-0.143px;">Bins</span>
<span class="t" style="left:364.98px;top:922px;font-size:14px;line-height:20px;color:#444746;letter-spacing:0.672px;-webkit-text-stroke:0.25px #444746;">Summary</span>
<span class="t" style="left:501.34px;top:922px;font-size:14px;line-height:20px;color:#444746;letter-spacing:0.759px;-webkit-text-stroke:0.25px #444746;">Assumptions</span>
<span class="t" style="left:633.88px;top:922px;font-size:14px;line-height:20px;color:#444746;letter-spacing:0.565px;-webkit-text-stroke:0.25px #444746;">Formulas</span>
<svg style="left:0;top:913px" width="1557" height="33" viewBox="0 913 1557 33"><path d="M234.29999999999998 930h7.6l-3.8 4.2z" fill="#444746"/><path d="M442.2 930h7.6l-3.8 4.2z" fill="#444746"/><path d="M601.2 930h7.6l-3.8 4.2z" fill="#444746"/><path d="M708.2 930h7.6l-3.8 4.2z" fill="#444746"/><path d="M333 930h7.8l-3.9 4.2z" fill="#0b57d0"/><path d="M57 931.3h10.2v1.6H57zM61.3 927.2h1.6v10h-1.6z" fill="#444746"/><path d="M94.8 927.4h14.4v1.6H94.8zM94.8 931.4h14.4v1.6H94.8zM94.8 935.4h14.4v1.6H94.8z" fill="#444746"/></svg>
</div>
</body>
</html>
